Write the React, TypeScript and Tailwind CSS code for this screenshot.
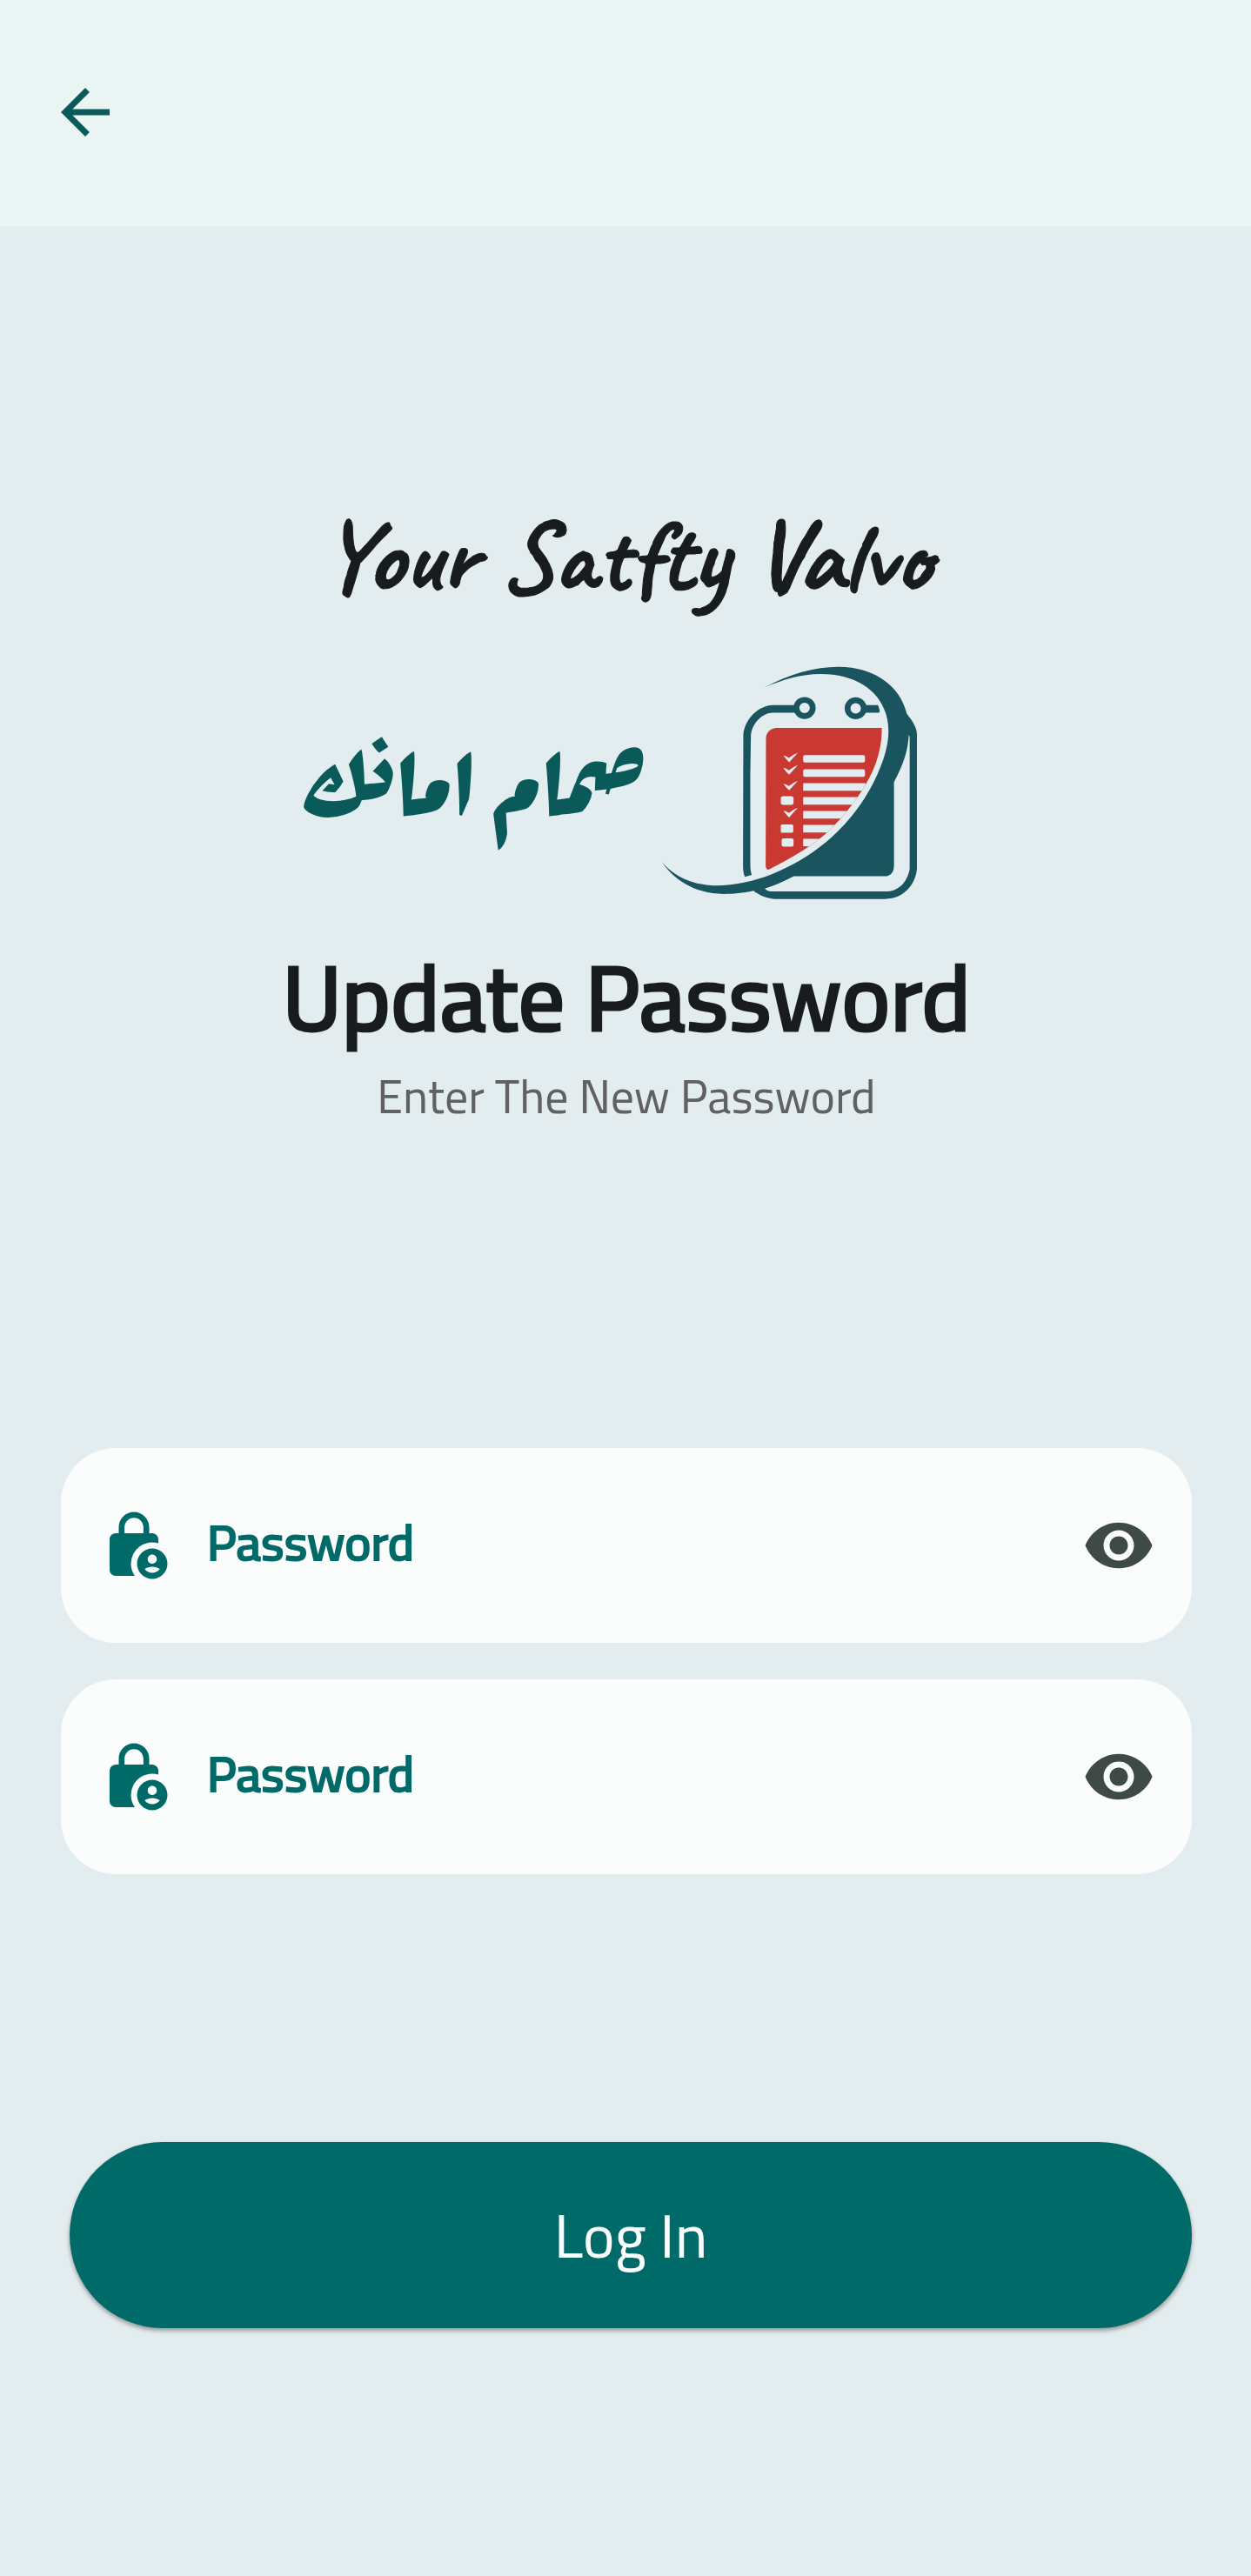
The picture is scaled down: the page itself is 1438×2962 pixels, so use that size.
import { useState } from "react";
import { MdArrowBack, MdLockPerson, MdVisibility } from "react-icons/md";

const redPanel =
  "M421 325C421 305 438 289 458 289H820C821 350 805 415 765 483C720 560 640 655 565 700C520 730 470 757 430 777Q421 777 420 765Z";

function Logo() {
  return (
    <svg viewBox="60 76 884 806" className="w-[295px] h-[269px] shrink-0" aria-hidden="true">
      <defs>
        <clipPath id="panel">
          <path d={redPanel} />
        </clipPath>
      </defs>
      <g fill="#1a555f">
        <path
          fillRule="evenodd"
          d="M417 149C500 103 590 78 670 78C790 78 882 140 906 240C925 264 940 285 941 310V775C935 835 890 878 830 878H450C422 876 400 866 378 850C340 858 310 861 275 861C180 858 110 820 62 750C110 808 180 832 255 832C330 830 400 812 460 785C600 725 718 620 790 480C826 408 843 350 843 300C843 185 755 103 610 103C540 103 480 122 417 149ZM913 312C910 365 897 410 862 475V765C861 787 850 799 830 800H517C480 820 450 832 417 842C422 848 428 851 440 852H840C878 850 908 820 916 775V320Z"
        />
        <path d="M348 802C344 790 342 780 342 765L343 310C350 255 395 212 445 210H525V236H445C408 236 370 275 369 318L367 450V760C367 775 369 785 372 795Z" />
        <path d="M760 210H807C810 217 812 225 813 232L810 236H760Z" />
      </g>
      <circle cx="554" cy="220" r="28" fill="#e3ecee" stroke="#1a555f" strokeWidth="20" />
      <circle cx="730" cy="221" r="28" fill="#e3ecee" stroke="#1a555f" strokeWidth="20" />
      <path d={redPanel} fill="#c93831" />
      <g fill="#e3ecee" clipPath="url(#panel)">
        <rect x="549" y="382" width="213" height="26" rx="6" />
        <rect x="549" y="431" width="213" height="26" rx="6" />
        <path d="M549 479H762L770 490L760 505H549Z" />
        <path d="M549 527H760V553H549Z" />
        <path d="M549 575H730V601H549Z" />
        <path d="M549 623H700V649H549Z" />
        <path d="M549 671H640V700L549 696Z" />
        {[0, 43, 97, 190].map((y) => (
          <path key={y} transform={`translate(0 ${y})`} d="M481 384Q488 383 500 392Q514 380 531 374Q520 386 501 407Q491 398 481 384Z" />
        ))}
        <rect x="472" y="524" width="44" height="30" rx="8" />
        <rect x="472" y="621" width="43" height="29" rx="5" />
        <rect x="475" y="669" width="41" height="29" rx="6" />
      </g>
    </svg>
  );
}

function PasswordField({ id }: { id: string }) {
  const [visible, setVisible] = useState(false);
  return (
    <div className="flex h-56 items-center rounded-[63px] bg-[#fbfdfc] px-[42px]">
      <label htmlFor={id} aria-label="Password">
        <MdLockPerson className="size-[84px] text-[#006a69]" />
      </label>
      <input
        id={id}
        type={visible ? "text" : "password"}
        placeholder="Password"
        className="ml-[42px] h-28 min-w-0 flex-1 bg-transparent pb-2 text-[57px] font-medium text-[#006a69] outline-none [-webkit-text-stroke:2px_#006a69] placeholder:text-[#006a69]"
      />
      <button type="button" aria-label="Show password" onClick={() => setVisible(!visible)}>
        <MdVisibility className="size-[84px] text-[#3f4948]" />
      </button>
    </div>
  );
}

export default function App() {
  return (
    <div className="min-h-screen bg-[#e3ecee] font-['Cairo','Noto_Sans',sans-serif] text-[#191c1c]">
      <header className="flex h-[260px] items-center bg-[#ebf5f3] px-14 pb-0.5">
        <button type="button" aria-label="Back">
          <MdArrowBack className="size-[84px] text-[#0a5a5a]" />
        </button>
      </header>
      <main className="flex flex-col pl-[70px] pr-[68px] pt-[308px]">
        <p className="text-center font-['Caveat','Lato',cursive] text-[117px] leading-[144px] font-bold [font-variant-ligatures:no-common-ligatures] [-webkit-text-stroke:1px_#191c1c]">
          Your Satfty Valvo
        </p>
        <div className="mt-[54px] flex items-center justify-center gap-4 pr-[38px]">
          <p dir="rtl" lang="ar" className="font-['Rakkas','Cairo','DejaVu_Sans',sans-serif] text-[124px] leading-[130px] text-[#0a5a5a]">
            صمام امانك
          </p>
          <Logo />
        </div>
        <h1 className="mt-[42px] text-center text-[106px] leading-[140px] font-medium [-webkit-text-stroke:3px_#191c1c]">Update Password</h1>
        <p className="text-center text-[54px] leading-[88px] text-[#616161]">Enter The New Password</p>
        <form className="mt-[360px] flex flex-col" onSubmit={(e) => e.preventDefault()}>
          <div className="flex flex-col gap-[42px]">
            <PasswordField id="new-password" />
            <PasswordField id="confirm-password" />
          </div>
          <button
            type="submit"
            className="mt-[308px] ml-2.5 h-[214px] rounded-full bg-[#006a69] text-[70px] text-[#fbfdfc] shadow-[0_3px_5px_rgba(0,0,0,0.35)]"
          >
            Log In
          </button>
        </form>
      </main>
    </div>
  );
}
